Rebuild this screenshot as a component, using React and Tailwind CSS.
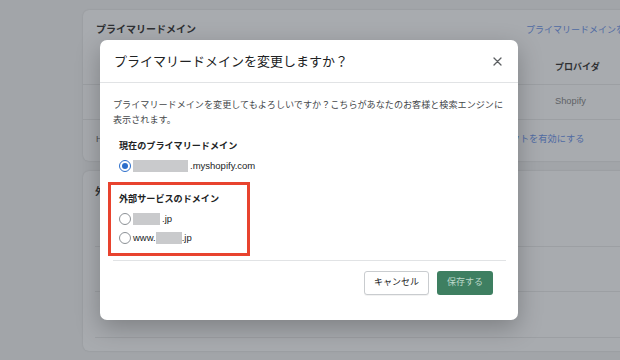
import React from 'react';

const Radio = ({ checked }) =>
  checked ? (
    <span className="w-[12px] h-[12px] rounded-full border-[1.5px] border-[#2c6ecb] flex items-center justify-center bg-white shrink-0">
      <span className="w-[6px] h-[6px] rounded-full bg-[#2c6ecb]" />
    </span>
  ) : (
    <span className="w-[12px] h-[12px] rounded-full border border-[#8c9196] bg-white shrink-0" />
  );

const Blur = ({ w }) => <span className="h-[12px] bg-[#c9cacc] inline-block" style={{ width: w }} />;

const App = () => {
  return (
    <div className="relative w-[620px] h-[360px] overflow-hidden bg-[#a2a5a9] font-['Liberation_Sans','Noto_Sans_CJK_JP',sans-serif]">
      {/* page behind the overlay */}
      <div className="pl-[83px] pt-[10px]">
        <div className="w-[560px] h-[151px] bg-[#a8abaf] rounded-[6px] pt-[13px] shadow-[0_0_2px_rgba(0,0,0,0.12)]">
          <div className="flex pl-[13px] leading-[14px]">
            <div className="w-[449px] text-[10px] font-bold text-[#2e3033]">プライマリードメイン</div>
            <div className="text-[9px] text-[#4f6aa3] whitespace-nowrap">プライマリードメインを変更</div>
          </div>
          <div className="flex items-end h-[48px] pb-[10px] pl-[472px] border-b border-[#9c9fa3] leading-[14px]">
            <div className="text-[9px] font-bold text-[#2e3033]">プロバイダ</div>
          </div>
          <div className="flex items-center h-[35px] pl-[472px] border-b border-[#9c9fa3]">
            <div className="text-[9.3px] text-[#5f6266]">Shopify</div>
          </div>
          <div className="flex items-center h-[40px] pl-[13px]">
            <div className="w-[378px] text-[9px] text-[#4a4d51]">H</div>
            <div className="text-[9.2px] text-[#4f6aa3] whitespace-nowrap">リダイレクトを有効にする</div>
          </div>
        </div>

        <div className="w-[560px] h-[180px] mt-[10px] bg-[#a8abaf] rounded-[6px] pt-[14px] shadow-[0_0_2px_rgba(0,0,0,0.12)]">
          <div className="pl-[12px] text-[10px] leading-[14px] font-bold text-[#2e3033]">外部</div>
          <div className="ml-[12px] h-[48px] border-b border-[#9c9fa3]" />
          <div className="ml-[12px] h-[45px] border-b border-[#9c9fa3]" />
          <div className="ml-[12px] h-[46px] border-b border-[#9c9fa3]" />
        </div>
      </div>

      {/* modal */}
      <div className="absolute left-[100px] top-[40px] w-[418px] h-[280px] bg-white rounded-[7px] shadow-[0_8px_24px_rgba(0,0,0,0.25)]">
        <div className="h-[43px] flex items-center justify-between pl-[14px] pr-[16px] border-b border-[#e1e3e5]">
          <h2 className="text-[13px] text-[#202223] leading-none">プライマリードメインを変更しますか？</h2>
          <svg width="9" height="9" viewBox="0 0 9 9" className="text-[#5c5f62]">
            <path d="M1 1L8 8M8 1L1 8" stroke="currentColor" strokeWidth="1.3" strokeLinecap="round" />
          </svg>
        </div>

        <div className="px-[13px] pt-[15px]">
          <p className="text-[9.1px] leading-[15px] text-[#44474a] whitespace-nowrap">
            プライマリードメインを変更してもよろしいですか？こちらがあなたのお客様と検索エンジンに
            <br />
            表示されます。
          </p>

          <div className="pl-[6px] mt-[11px]">
            <div className="text-[9.1px] leading-[15px] font-bold text-[#202223]">現在のプライマリードメイン</div>
            <div className="flex items-center gap-[2px] h-[14px] mt-[5px] text-[9.5px] text-[#202223]">
              <Radio checked />
              <Blur w={55} />
              <span>.myshopify.com</span>
            </div>
          </div>

          <div className="ml-[-5px] mt-[9px] w-[142px] border-[3px] border-[#e8432e] pl-[8px] pt-[7px] pb-[8px]">
            <div className="text-[9.1px] leading-[15px] font-bold text-[#202223]">外部サービスのドメイン</div>
            <div className="flex items-center gap-[2px] h-[14px] mt-[5px] text-[9.5px] text-[#202223]">
              <Radio />
              <Blur w={27} />
              <span>.jp</span>
            </div>
            <div className="flex items-center h-[14px] mt-[5px] text-[9.5px] text-[#202223]">
              <Radio />
              <span className="ml-[2px]">www.</span>
              <Blur w={26} />
              <span>.jp</span>
            </div>
          </div>

          <div className="mt-[4px] mr-[-1px] border-t border-[#e1e3e5]" />
        </div>

        <div className="flex justify-end gap-[8px] pt-[10px] pr-[25px]">
          <button className="h-[24px] w-[65px] rounded-[3px] border border-[#c9cccf] bg-white text-[9px] text-[#202223] shadow-[0_1px_0_rgba(0,0,0,0.05)]">
            キャンセル
          </button>
          <button className="h-[24px] w-[56px] rounded-[3px] bg-[#3e7f61] text-[9px] text-[#bcd8c9]">
            保存する
          </button>
        </div>
      </div>
    </div>
  );
};

export default App;
